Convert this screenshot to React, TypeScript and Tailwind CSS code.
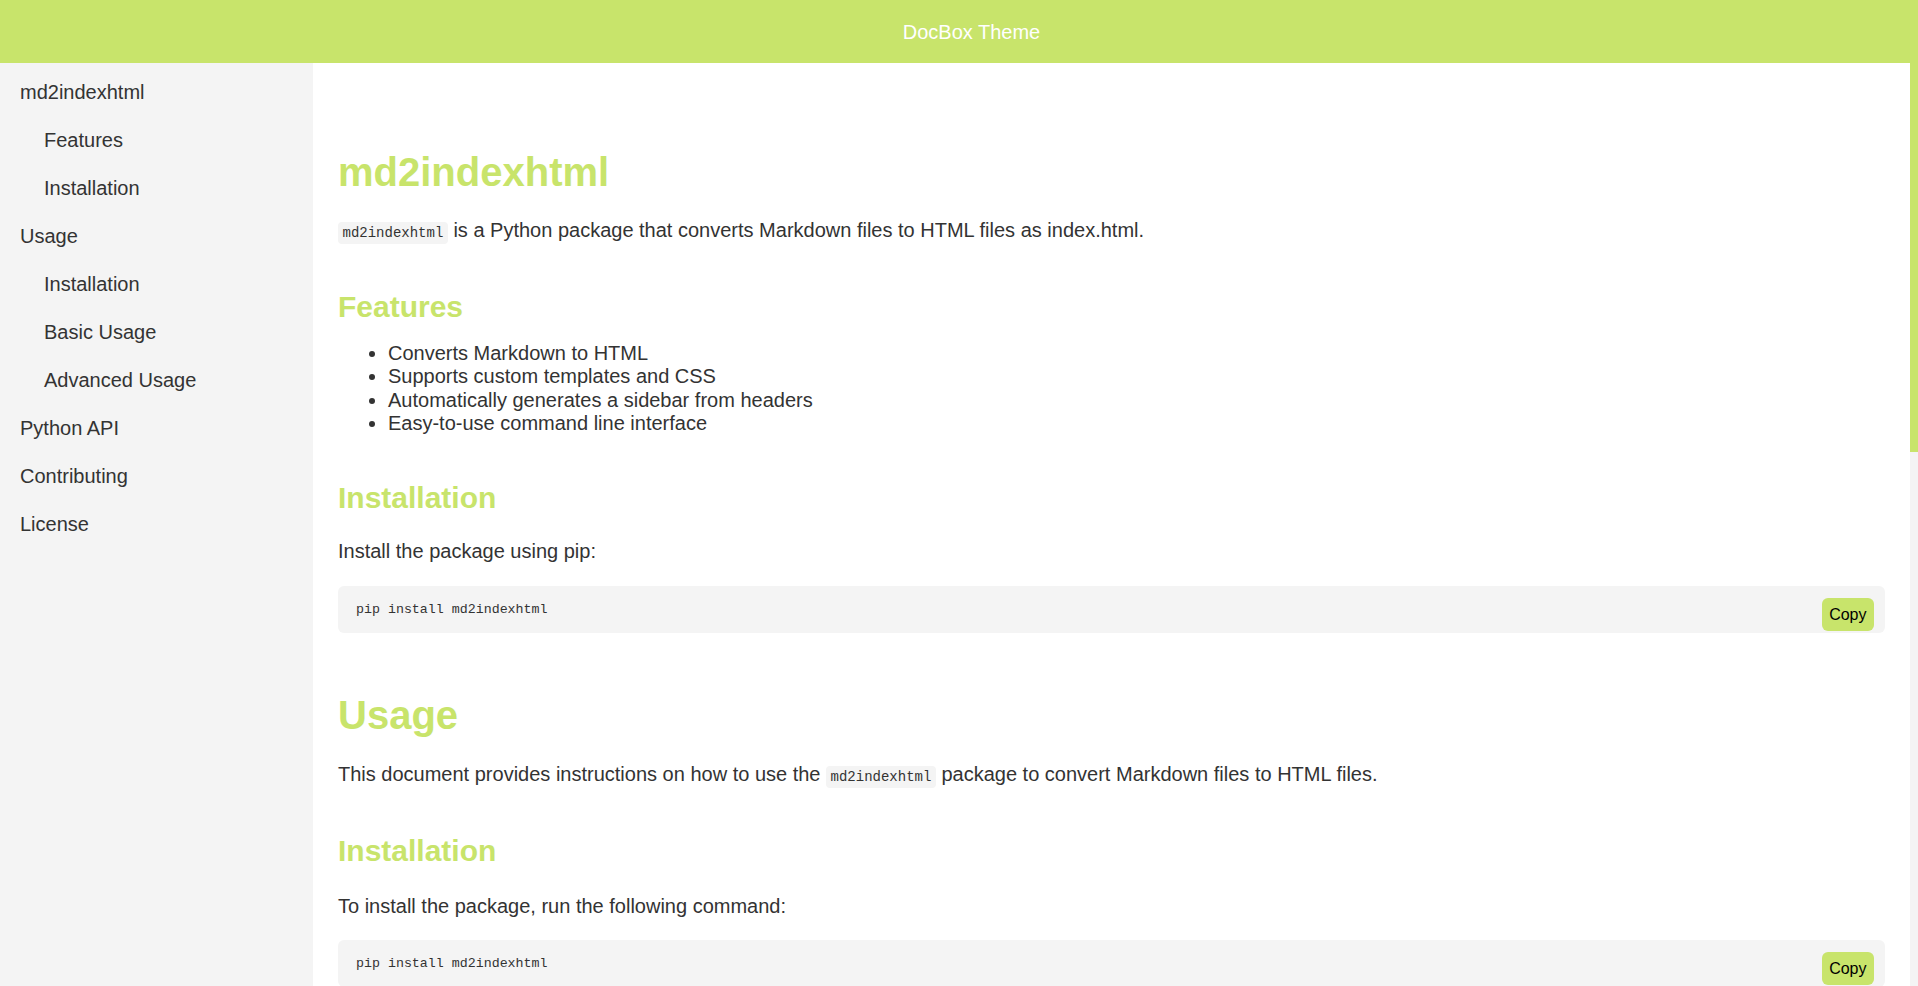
import React from 'react'

const nav = [
  { label: 'md2indexhtml', sub: false },
  { label: 'Features', sub: true },
  { label: 'Installation', sub: true },
  { label: 'Usage', sub: false },
  { label: 'Installation', sub: true },
  { label: 'Basic Usage', sub: true },
  { label: 'Advanced Usage', sub: true },
  { label: 'Python API', sub: false },
  { label: 'Contributing', sub: false },
  { label: 'License', sub: false },
]

const Code = ({ children }: { children: React.ReactNode }) => (
  <code className="rounded-[4px] bg-[#f4f4f4] px-[4.5px] py-[3px] font-['Liberation_Mono',monospace] text-[14px] text-[#333]">
    {children}
  </code>
)

const CodeBlock = ({ code, className = '' }: { code: string; className?: string }) => (
  <div className={`relative rounded-[6px] bg-[#f4f4f4] ${className}`}>
    <pre className="m-0 overflow-x-auto px-[18px] py-[15px] font-['Liberation_Mono',monospace] text-[13.3px] leading-[17px] text-[#333]">
      {code}
    </pre>
    <button className="absolute top-[12px] right-[11px] rounded-[6px] bg-[#c8e46b] px-[7.5px] py-[7.5px] font-['Liberation_Sans',Arial,sans-serif] text-[16px] leading-[18px] text-black">
      Copy
    </button>
  </div>
)

const H1 = ({ children, className = '' }: { children: React.ReactNode; className?: string }) => (
  <h1 className={`text-[40px] leading-[46px] font-bold text-[#c8e46b] ${className}`}>{children}</h1>
)

const H2 = ({ children, className = '' }: { children: React.ReactNode; className?: string }) => (
  <h2 className={`text-[30px] leading-[34.5px] font-bold text-[#c8e46b] ${className}`}>{children}</h2>
)

const P = ({ children, className = '' }: { children: React.ReactNode; className?: string }) => (
  <p className={`text-[20px] leading-[23px] ${className}`}>{children}</p>
)

export default function App() {
  return (
    <div className="flex h-screen flex-col bg-white font-['Liberation_Sans',Arial,sans-serif] text-[#333]">
      <header className="flex h-[63px] shrink-0 items-center justify-center bg-[#c8e46b] pl-[25px] text-[20px] text-white">
        DocBox Theme
      </header>

      <div className="flex min-h-0 flex-1">
        <aside className="w-[313px] shrink-0 bg-[#f4f4f4] pt-[5px]">
          <ul>
            {nav.map((item, i) => (
              <li
                key={i}
                className={`py-[12.5px] text-[20px] leading-[23px] ${item.sub ? 'pl-[44px]' : 'pl-[20px]'}`}
              >
                {item.label}
              </li>
            ))}
          </ul>
        </aside>

        <main className="min-w-0 flex-1 overflow-y-auto px-[25px] pb-[300px] [scrollbar-width:none]">
          <H1 className="mt-[85.5px]">md2indexhtml</H1>
          <P className="mt-[24px]">
            <Code>md2indexhtml</Code> is a Python package that converts Markdown files to HTML files as index.html.
          </P>

          <H2 className="mt-[45px]">Features</H2>
          <ul className="mt-[18px] list-disc pl-[50px] text-[20px] leading-[23.3px]">
            <li>Converts Markdown to HTML</li>
            <li>Supports custom templates and CSS</li>
            <li>Automatically generates a sidebar from headers</li>
            <li>Easy-to-use command line interface</li>
          </ul>

          <H2 className="mt-[46px]">Installation</H2>
          <P className="mt-[24.3px]">Install the package using pip:</P>
          <CodeBlock className="mt-[23.5px]" code="pip install md2indexhtml" />

          <H1 className="mt-[58.5px]">Usage</H1>
          <P className="mt-[24.6px]">
            This document provides instructions on how to use the <Code>md2indexhtml</Code> package to convert
            Markdown files to HTML files.
          </P>

          <H2 className="mt-[45.5px]">Installation</H2>
          <P className="mt-[26px]">To install the package, run the following command:</P>
          <CodeBlock className="mt-[22.6px]" code="pip install md2indexhtml" />

          <H2 className="mt-[47.5px]">Basic Usage</H2>
          <P className="mt-[25.5px]">Navigate to the directory containing your Markdown file and run:</P>
          <CodeBlock className="mt-[23.5px]" code="md2indexhtml README.md" />

          <H2 className="mt-[47.5px]">Advanced Usage</H2>
          <P className="mt-[25.5px]">You can specify a custom output directory and a custom template:</P>
          <CodeBlock className="mt-[23.5px]" code="md2indexhtml README.md --output_dir ./docs --template custom.html" />

          <H1 className="mt-[55px]">Python API</H1>
          <P className="mt-[26.5px]">You can also use the package from Python code:</P>
          <CodeBlock
            className="mt-[23.5px]"
            code={'from md2indexhtml import convert_md_to_html\n\nconvert_md_to_html("README.md", output_dir="./docs")'}
          />

          <H1 className="mt-[55px]">Contributing</H1>
          <P className="mt-[26.5px]">Contributions are welcome! Please open an issue or submit a pull request.</P>

          <H1 className="mt-[55px]">License</H1>
          <P className="mt-[26.5px]">This project is licensed under the MIT License.</P>
        </main>

        {/* scrollbar */}
        <div className="w-[8px] shrink-0 bg-[#f4f4f4]">
          <div className="h-[389px] bg-[#c8e46b]" />
        </div>
      </div>
    </div>
  )
}
